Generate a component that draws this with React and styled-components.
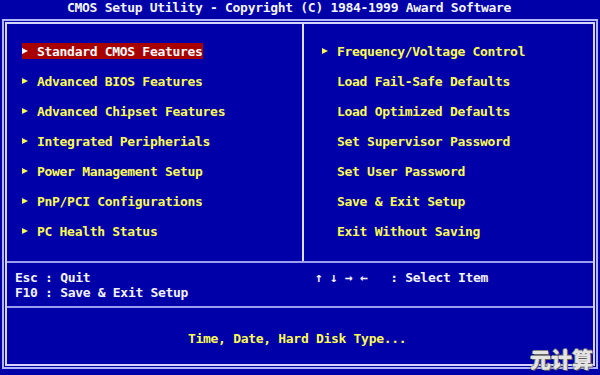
import React from 'react'
import styled, { createGlobalStyle } from 'styled-components'

const GlobalStyle = createGlobalStyle`
    html, body {
        margin:0;
        padding:0;
        background:#0000a8;
    }
    body {
        font-family:"DejaVu Sans Mono", "Liberation Mono", monospace;
        font-weight:bold;
        font-size:13px;
        letter-spacing:-0.3px;
        color:#fcfcfc;
    }
`

const Screen = styled.div`
    position:relative;
    width:600px;
    height:375px;
    overflow:hidden;
    background:#0000a8;
`

const Title = styled.div`
    height:19px;
    padding-left:67px;
    line-height:15px;
    color:#f4f4fc;
    white-space:pre;
`

const Frame = styled.div`
    box-sizing:border-box;
    width:596px;
    height:350px;
    margin-left:2px;
    padding:1px;
    border:2px solid #b4b4f8;
`

const Panel = styled.div`
    box-sizing:border-box;
    height:100%;
    border:2px solid #d4d4fc;
    display:grid;
    grid-template-rows:237px 2px 43px 2px 1fr;
`

const Menu = styled.div`
    display:grid;
    grid-template-columns:295px 2px 1fr;
`

const Column = styled.div`
    display:flex;
    flex-direction:column;
    gap:14px;
    padding-top:19px;
    padding-left:${props => props.$indent}px;
`

const VLine = styled.div`
    background:#dcdcfc;
`

const HLine = styled.div`
    background:#9c9cf0;
`

const Item = styled.div`
    box-sizing:border-box;
    display:flex;
    width:fit-content;
    height:16px;
    padding-top:1px;
    line-height:15px;
    white-space:pre;
    color:${props => props.$active ? '#fcfcfc' : '#fcfc54'};
    background:${props => props.$active ? '#a80000' : 'transparent'};
`

const Marker = styled.span`
    position:relative;
    width:15px;
    flex-shrink:0;
    &::before {
        content:${props => props.$show ? "''" : 'none'};
        position:absolute;
        left:0;
        top:4px;
        border-left:6px solid currentColor;
        border-top:3.5px solid transparent;
        border-bottom:3.5px solid transparent;
    }
`

const Help = styled.div`
    display:grid;
    grid-template-columns:297px 1fr;
    padding-top:7px;
`

const HelpCol = styled.div`
    padding-left:${props => props.$indent}px;
    line-height:15px;
    white-space:pre;
    color:#f4f4fc;
`

const Status = styled.div`
    padding-top:23px;
    padding-left:181px;
    line-height:16px;
    color:#fcfc54;
    white-space:pre;
`

const Watermark = styled.div`
    position:absolute;
    right:7px;
    bottom:5px;
    font-family:"Noto Sans CJK SC", sans-serif;
    font-size:21px;
    font-weight:900;
    letter-spacing:0;
    line-height:24px;
    color:#e4e4e4;
    text-shadow:1px 1px 0 #606060, -1px 0 0 #808080, 0 -1px 0 #808080;
`

const leftItems = [
    'Standard CMOS Features',
    'Advanced BIOS Features',
    'Advanced Chipset Features',
    'Integrated Peripherials',
    'Power Management Setup',
    'PnP/PCI Configurations',
    'PC Health Status',
]

const rightItems = [
    'Frequency/Voltage Control',
    'Load Fail-Safe Defaults',
    'Load Optimized Defaults',
    'Set Supervisor Password',
    'Set User Password',
    'Save & Exit Setup',
    'Exit Without Saving',
]

const App = () => {
    return (
        <Screen>
            <GlobalStyle/>
            <Title>CMOS Setup Utility - Copyright (C) 1984-1999 Award Software</Title>
            <Frame>
                <Panel>
                    <Menu>
                        <Column $indent={15}>
                            {leftItems.map((label, i) => (
                                <Item key={label} $active={i === 0}>
                                    <Marker $show/>{label}
                                </Item>
                            ))}
                        </Column>
                        <VLine/>
                        <Column $indent={18}>
                            {rightItems.map((label, i) => (
                                <Item key={label}>
                                    <Marker $show={i === 0}/>{label}
                                </Item>
                            ))}
                        </Column>
                    </Menu>
                    <HLine/>
                    <Help>
                        <HelpCol $indent={8}>
                            {'Esc : Quit'}<br/>
                            {'F10 : Save & Exit Setup'}
                        </HelpCol>
                        <HelpCol $indent={11}>
                            {'↑ ↓ → ←   : Select Item'}
                        </HelpCol>
                    </Help>
                    <HLine/>
                    <Status>Time, Date, Hard Disk Type...</Status>
                </Panel>
            </Frame>
            <Watermark>元计算</Watermark>
        </Screen>
    )
}

export default App
